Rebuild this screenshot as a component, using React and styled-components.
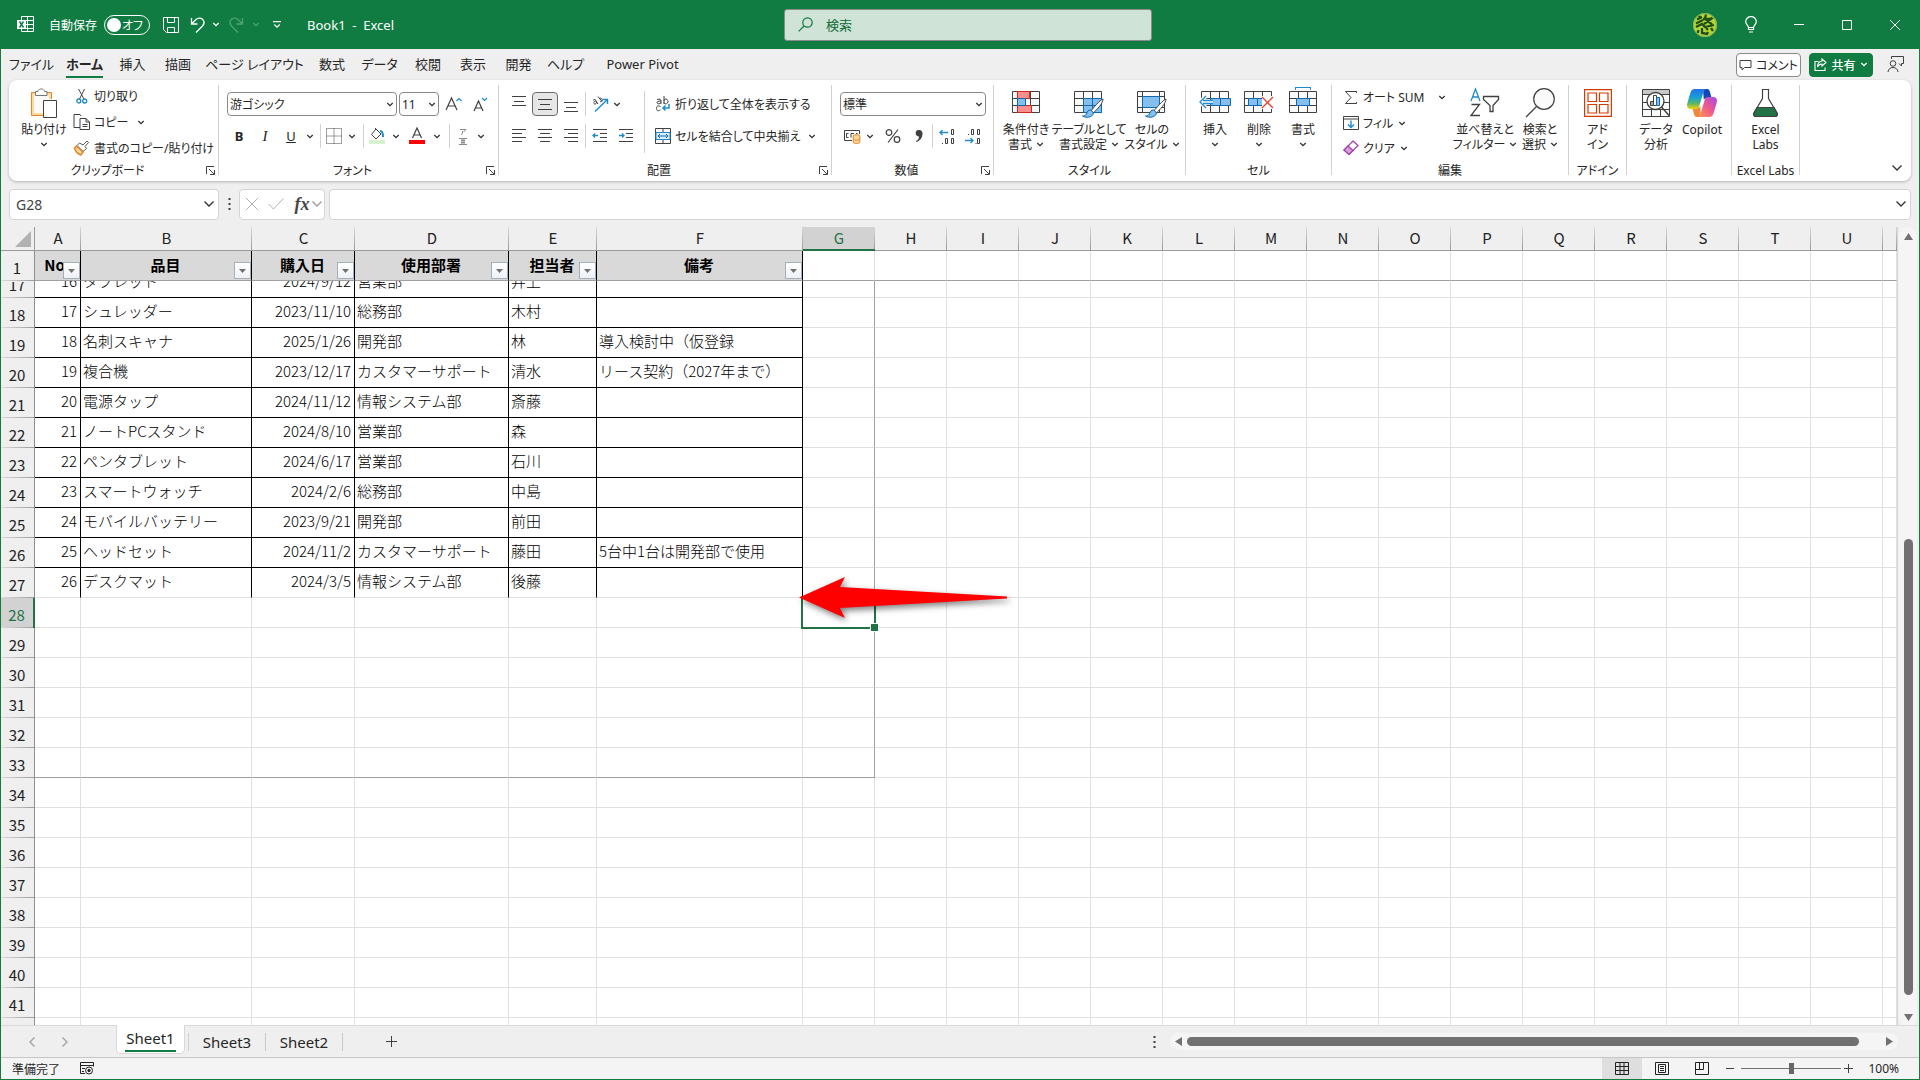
import { useState } from "react";
import styled, { createGlobalStyle, css } from "styled-components";

const GREEN = "#107c41";
const INK = "#262626";
const BLUE = "#1e8bcd";

const GlobalStyle = createGlobalStyle`
    * {
        box-sizing: border-box;
    }
    body {
        margin: 0;
        font-family: "Noto Sans", "Noto Sans CJK JP", sans-serif;
        font-size: 12px;
        color: ${INK};
    }
    button, input, select {
        font: inherit;
        color: inherit;
        font-feature-settings: inherit;
    }
    button {
        padding: 0;
        border: 0;
        background: transparent;
        cursor: pointer;
    }
    svg {
        display: block;
        flex: none;
    }
`;

const Window = styled.div`
    display: flex;
    flex-direction: column;
    height: 100vh;
    background: #efefef;
    border: 1px solid ${GREEN};
    border-top: 0;
    font-feature-settings: "palt";
    white-space: nowrap;
    overflow: hidden;
`;

/* ---------- title bar ---------- */

const TitleBar = styled.header`
    display: grid;
    grid-template-columns: 1fr 368px 1fr;
    align-items: center;
    flex: none;
    height: 49px;
    padding: 0 0 8px 16px;
    background: ${GREEN};
    color: #fff;
`;

const TitleSide = styled.div`
    display: flex;
    align-items: center;
    justify-content: ${(p) => (p.$end ? "flex-end" : "flex-start")};
    padding-top: 8px;
`;

const AutoSave = styled.label`
    display: flex;
    align-items: center;
    gap: 7px;
    margin: 0 8px 0 15px;
`;

const Toggle = styled.button`
    display: flex;
    align-items: center;
    justify-content: space-between;
    width: 46px;
    height: 20px;
    padding: 0 6px 0 2px;
    border: 1px solid #fff;
    border-radius: 10px;

    &::before {
        content: "";
        width: 14px;
        height: 14px;
        border-radius: 50%;
        background: #fff;
    }
`;

const BookName = styled.span`
    margin-left: 13px;
    font-size: 13px;
    white-space: pre;
`;

const SearchBox = styled.label`
    display: flex;
    align-items: center;
    gap: 13px;
    height: 32px;
    margin-top: 8px;
    padding: 0 13px;
    background: #cfe3d7;
    border: 1px solid #8b8b8b;
    border-radius: 3px;
    color: ${GREEN};

    input {
        flex: 1;
        border: 0;
        padding: 0;
        outline: none;
        background: transparent;
        font-size: 13px;
    }
    input::placeholder {
        color: #0e6b38;
        opacity: 1;
    }
`;

const IconButton = styled.button`
    display: flex;
    align-items: center;
    justify-content: center;
    flex: none;
    width: ${(p) => p.$w || 26}px;
    height: 24px;
    ${(p) =>
        p.$on &&
        css`
            background: #e6e6e6;
            border: 1px solid #6b6b6b;
            border-radius: 4px;
        `}
`;

const ItalicButton = styled(IconButton)`
    font: italic 15px "Liberation Serif", serif;
`;

const LetterButton = styled(IconButton)`
    font-size: 13px;
`;

/* ---------- ribbon ---------- */

const TabBar = styled.nav`
    display: flex;
    align-items: center;
    flex: none;
    height: 31px;
    padding: 0 11px 0 3px;
`;

const RibbonTab = styled.button`
    flex: none;
    display: flex;
    justify-content: center;
    width: ${(p) => p.$w}px;
    padding-top: 1px;
    font-size: 13px;
    font-weight: ${(p) => (p.$on ? 700 : 400)};

    span {
        line-height: 24px;
        border-bottom: 2px solid ${(p) => (p.$on ? GREEN : "transparent")};
    }
`;

const Spacer = styled.div`
    flex: 1;
`;

const CommentButton = styled.button`
    display: flex;
    align-items: center;
    justify-content: center;
    gap: 4px;
    width: 65px;
    height: 24px;
    margin-right: 8px;
    background: #fff;
    border: 1px solid #8a8a8a;
    border-radius: 4px;
`;

const ShareButton = styled(CommentButton)`
    width: 64px;
    margin-right: 9px;
    background: ${GREEN};
    border-color: ${GREEN};
    color: #fff;
    font-weight: 500;
`;

const RibbonCard = styled.section`
    display: flex;
    align-items: stretch;
    flex: none;
    height: 101px;
    margin: 0 8px;
    padding: 5px 0 6px;
    background: #fff;
    border-radius: 8px;
    box-shadow: 0 1px 3px rgba(0, 0, 0, 0.25);
`;

const GroupBox = styled.div`
    display: flex;
    flex-direction: column;
    flex: none;
    width: ${(p) => p.$w}px;
    border-right: 1px solid #d1d1d1;
`;

const GroupBody = styled.div`
    display: flex;
    flex: 1;
    padding-left: ${(p) => p.$pad || 0}px;
`;

const GroupFooter = styled.div`
    display: flex;
    align-items: center;
    justify-content: center;
    height: 14px;
    margin-bottom: -2px;

    span {
        flex: 1;
        text-align: center;
    }
    button {
        width: 12px;
    }
`;

const BigButton = styled.button`
    display: flex;
    flex-direction: column;
    align-items: center;
    align-self: flex-start;
    flex: none;
    width: ${(p) => p.$w}px;
    gap: 3px;
    padding-top: 2px;
    line-height: 15px;

    > svg {
        height: 32px;
    }
    span {
        display: flex;
        align-items: center;
        justify-content: center;
        gap: 4px;
        min-height: 15px;
    }
`;

const Stack = styled.div`
    display: flex;
    flex-direction: column;
    gap: ${(p) => p.$gap}px;
    padding-top: ${(p) => p.$top || 0}px;
    width: ${(p) => (p.$w ? p.$w + "px" : "auto")};
`;

const Line = styled.div`
    display: flex;
    align-items: center;
`;

const SmallButton = styled.button`
    display: flex;
    align-items: center;
    gap: 2px;
    min-width: ${(p) => p.$w || 0}px;
    height: ${(p) => p.$h || 22}px;

    > svg:first-child {
        width: 20px;
    }
    > svg + svg,
    > span + svg {
        margin-left: 3px;
    }
`;

const Rule = styled.i`
    flex: none;
    width: 1px;
    height: 24px;
    margin: 0 ${(p) => p.$m}px;
    background: #d1d1d1;
`;

const TallRule = styled(Rule)`
    height: 62px;
    margin: 6px 8px 0 5px;
`;

const SelectBox = styled.label`
    display: grid;
    align-items: center;
    width: ${(p) => p.$w}px;
    height: 24px;
    margin-right: 2px;
    border: 1px solid #8a8a8a;
    border-radius: 4px;
    background: #fff;

    > * {
        grid-area: 1 / 1;
    }
    select {
        width: 100%;
        height: 22px;
        padding: 0 2px;
        appearance: none;
        border: 0;
        outline: none;
        background: transparent;
    }
    svg {
        justify-self: end;
        margin-right: 2px;
        pointer-events: none;
    }
`;

const Collapse = styled.button`
    align-self: flex-end;
    margin: 0 8px 3px auto;
`;

/* ---------- formula bar ---------- */

const FormulaBar = styled.div`
    display: flex;
    align-items: center;
    flex: none;
    height: 32px;
    margin: 7px 8px;
`;

const Field = styled.div`
    display: flex;
    align-items: center;
    flex: none;
    width: ${(p) => p.$w}px;
    height: 31px;
    padding: ${(p) => p.$pad || "0 3px 0 6px"};
    background: #fff;
    border: 1px solid #d4d4d4;
    border-radius: 4px;

    input {
        flex: 1;
        min-width: 0;
        padding: 0;
        border: 0;
        outline: none;
        font-size: 14px;
        background: transparent;
        color: #444;
    }
`;

const FormulaField = styled(Field)`
    flex: 1;
    width: auto;
    margin-left: 4px;
`;

const Fx = styled.span`
    width: 22px;
    font: italic 700 18px "Liberation Serif", serif;
    line-height: 20px;
    color: #444;
    text-align: center;
`;

/* ---------- sheet ---------- */

const SheetArea = styled.main`
    display: flex;
    flex: 1;
    min-height: 0;
`;

const SheetPane = styled.div`
    flex: 1;
    min-width: 0;
    overflow: hidden;
    background: #fff;
    border-right: 1px solid #d8d8d8;
`;

const Sheet = styled.table`
    width: 100%;
    table-layout: fixed;
    border-collapse: separate;
    border-spacing: 0;
    font-family: "Noto Sans CJK JP", sans-serif;
    font-size: 15px;
    font-weight: 300;
    font-feature-settings: normal;
    color: #000;

    th,
    td {
        padding: 0;
        font-weight: inherit;
    }
`;

const Corner = styled.th`
    background: #efefef;
    border-right: 1px solid #9b9b9b;
    border-bottom: 1px solid #9b9b9b;

    svg {
        margin: 4px 3px 3px auto;
    }
`;

const ColHead = styled.th`
    height: 24px;
    line-height: 21px;
    vertical-align: top;
    background: linear-gradient(#d8d8d8, #9b9b9b) right / 1px 100% no-repeat, ${(p) => (p.$on ? "#d2d2d2" : "#efefef")};
    border-bottom: ${(p) => (p.$on ? `2px solid #217346` : "1px solid #9b9b9b")};
    color: ${(p) => (p.$on ? "#217346" : "#222")};
    font-weight: 400 !important;
`;

const RowHead = styled.th`
    background: linear-gradient(90deg, #dcdcdc, #9b9b9b) bottom / 100% 1px no-repeat,
        ${(p) => (p.$on ? "#d2d2d2" : "#efefef")};
    border-right: ${(p) => (p.$on ? `2px solid #217346` : "1px solid #8e8e8e")};
    color: ${(p) => (p.$on ? "#217346" : "#222")};
    font-weight: 400 !important;
`;

const LINES = { light: "#e0e0e0", black: "#000", page: "#a0a0a0" };

const Cell = styled.td`
    position: relative;
    border-right: 1px solid ${(p) => LINES[p.$right || "light"]};
    border-bottom: 1px solid ${(p) => LINES[p.$bottom || "light"]};
    ${(p) =>
        p.$title &&
        css`
            background: #d9d9d9;
            font-weight: 700 !important;
        `}
`;

const CellBox = styled.div`
    display: flex;
    align-items: flex-end;
    justify-content: ${(p) => p.$align || "flex-start"};
    height: ${(p) => (p.$short ? 16 : 29)}px;
    padding: 0 3px 0 2px;
    overflow: hidden;

    span {
        height: 29px;
        line-height: ${(p) => p.$line || 25}px;
    }
`;

const FilterButton = styled.button`
    position: absolute;
    right: 0;
    bottom: 1px;
    display: flex;
    align-items: center;
    justify-content: center;
    width: 17px;
    height: 17px;
    background: linear-gradient(#fff, #eef1f6);
    border: 1px solid #a6b0bd;
`;

const Selection = styled.div`
    position: absolute;
    inset: -2px;
    border: 2px solid #217346;
    z-index: 1;

    &::after {
        content: "";
        position: absolute;
        right: -5px;
        bottom: -5px;
        width: 7px;
        height: 7px;
        background: #217346;
        border: 1px solid #fff;
    }
`;

const Pointer = styled.svg`
    position: absolute;
    left: -8px;
    top: -28px;
    z-index: 2;
    overflow: visible;
    pointer-events: none;
    filter: drop-shadow(2px 3px 3px rgba(0, 0, 0, 0.5));
`;

const VScroll = styled.div`
    display: flex;
    flex-direction: column;
    align-items: center;
    justify-content: space-between;
    flex: none;
    width: 18px;
    margin: 0 2px -2px 1px;
    padding: 5px 0;
    background: #f5f5f5;
    border-radius: 9px;
`;

const VTrack = styled.div`
    display: flex;
    flex-direction: column;
    flex: 1;
    width: 9px;

    &::before {
        content: "";
        flex: 298;
    }
    &::after {
        content: "";
        flex: 18;
    }
    i {
        flex: 456;
        border-radius: 5px;
        background: #717171;
    }
`;

/* ---------- sheet tabs and status bar ---------- */

const SheetTabs = styled.div`
    display: flex;
    align-items: center;
    flex: none;
    height: 32px;
    border-top: 1px solid #dadada;
    padding-left: 18px;
`;

const SheetTab = styled.button`
    width: 77px;
    height: 18px;
    border-right: 1px solid #c8c8c8;
    font-size: 15px;
    line-height: 16px;
`;

const ActiveTab = styled.button`
    align-self: flex-start;
    width: 69px;
    height: 29px;
    margin: -1px 3px 0 31px;
    padding: 0 8px;
    background: #fff;
    border: 1px solid #d8d8d8;
    border-top: 0;
    border-radius: 0 0 5px 5px;
    font-size: 15px;
    line-height: 24px;

    span {
        display: block;
        height: 26px;
        border-bottom: 2px solid ${GREEN};
    }
`;

const TabsRule = styled(Rule)`
    height: 18px;
`;

const HScroll = styled.div`
    display: flex;
    align-items: center;
    width: 728px;
    height: 17px;
    margin: 0 21px 0 14px;
    padding: 0 4px;
    gap: 4px;
    background: #f5f5f5;
    border-radius: 9px;

    i {
        flex: 1;
        height: 9px;
        margin-right: 22px;
        border-radius: 5px;
        background: #717171;
    }
`;

const StatusBar = styled.footer`
    display: flex;
    align-items: center;
    flex: none;
    height: 22px;
    padding: 0 20px 0 11px;
    background: #f4f4f4;
    border-top: 1px solid #c6c6c6;
    gap: 20px;
`;

const StatusRight = styled.div`
    display: flex;
    align-items: center;
    margin-left: auto;
    height: 21px;
`;

const ViewButton = styled.button`
    display: flex;
    align-items: center;
    justify-content: center;
    width: 40px;
    height: 21px;
    background: ${(p) => (p.$on ? "#dedede" : "transparent")};
`;

const Zoom = styled.input`
    width: 100px;
    height: 20px;
    margin: 0 3px;
    appearance: none;
    background: linear-gradient(#717171, #717171) center / 100% 1px no-repeat;

    &::-webkit-slider-thumb {
        appearance: none;
        width: 5px;
        height: 11px;
        background: #666;
    }
`;

const ZoomText = styled.span`
    width: 34px;
    margin-left: 12px;
    text-align: right;
`;

/* ---------- icons ---------- */

const Svg = ({ w = 16, h = 16, sw = 1, c = "#404040", children }) => (
    <svg
        width={w}
        height={h}
        viewBox={`0 0 ${w} ${h}`}
        fill="none"
        stroke={c}
        strokeWidth={sw}
        aria-hidden="true"
    >
        {children}
    </svg>
);

const Chev = ({ c = "#303030", big }) =>
    big ? (
        <Svg w={12} h={8} c={c} sw={1.3}>
            <path d="M1.5 1.5 6 6 10.5 1.5" />
        </Svg>
    ) : (
        <Svg w={8} h={5} c={c} sw={1.3}>
            <path d="M1.3 1 4 3.7 6.7 1" />
        </Svg>
    );

const ExcelLogo = () => (
    <Svg w={17} h={17} c="#fff">
        <path d="M4.5 4V.5h12v15h-12V13M10.5.5v15M4.5 4.5h12M8 8.5h8.5M4.5 12.5h12" />
        <path d="M0 4h9v9H0z" fill="#fff" stroke="none" />
        <path d="m2.5 5.5 4 6M6.5 5.5l-4 6" stroke={GREEN} strokeWidth="1.5" />
    </Svg>
);

const SaveIcon = () => (
    <Svg c="#fff">
        <path d="M.5.5h15v15h-12l-3-3zM4.5.5v5h7v-5M4.5 15.5v-5h7v5" />
    </Svg>
);

const UndoIcon = ({ flip, c = "#fff" }) => (
    <Svg c={c} sw={1.3}>
        <g transform={flip ? "matrix(-1 0 0 1 16 0)" : undefined}>
            <path d="M1.5 1v6h6M2 6.5l4-4C8.5.3 12 .8 13.5 3.5c1 2 .5 4-1 5.500L6 15.500" />
        </g>
    </Svg>
);

const Avatar = () => (
    <Svg w={24} h={24}>
        <circle cx="12" cy="12" r="12" fill="#b5d62c" stroke="none" />
        <path
            d="M4 6.500 9 4M3 10.500l7-3.500M6 2.500 7.500 6M13 1.500l-1 4M10 6h8l-7 5M13 6.500l6 5M19 4.500l-4 4M3 14l6-3 3 3 9-2M5.500 17l-1 3M9 15v5l5 1 1-2M13 15l2 2M18 15l2 3"
            stroke="#1f4d1b"
            strokeWidth="2.300"
        />
        <circle cx="12" cy="12" r="11.500" stroke="#7fb069" />
    </Svg>
);

const BulbIcon = () => (
    <Svg w={12} h={17} c="#fff" sw={1.2}>
        <path d="M3.500 11.500C3.500 9.500.7 8.500.7 5.500A5 5 0 0 1 6 .7a5 5 0 0 1 5.300 4.800c0 3-2.800 4-2.800 6zM3.500 11.500v2h5v-2M4 16h4" />
    </Svg>
);

const PasteIcon = () => (
    <Svg w={28} h={32}>
        <path d="M6 5.500H1.500v23H13M17 5.500h4.500V12" stroke="#e3852b" />
        <path d="M6 7H3v20h10M17 7h3v5" stroke="#fbd997" strokeWidth="2" />
        <path d="M4 8h15v4.500h-6V26H4z" fill="#fafafa" stroke="none" />
        <path d="M5.500 8.500v-4H8c.5-3.500 6-3.500 6.500 0H17v4z" fill="#fff" stroke="#777" />
        <path d="M13.500 13.500h13v17h-13z" fill="#fff" stroke="#404040" />
    </Svg>
);

const CutIcon = () => (
    <Svg w={12} h={16}>
        <path d="M2.500 1 8 11M8.500 1 3.500 11" />
        <circle cx="2.800" cy="13" r="2" stroke={BLUE} strokeWidth="1.300" />
        <circle cx="8.700" cy="13" r="2" stroke={BLUE} strokeWidth="1.300" />
    </Svg>
);

const CopyIcon = () => (
    <Svg w={17} h={16}>
        <path d="M6.500 13.500h-6V.5h6l1 1.500" />
        <path d="M6.500 4.500h6l3.500 3.500v7.500H6.500zM12.500 4.500V8H16M9 10.500h5M9 12.500h5" />
    </Svg>
);

const PainterIcon = () => (
    <Svg w={17} h={16}>
        <path d="m9.500 5 4-4 1.500 1.500-3.500 4 1.500 2-3.500 3-6-6 2.500-2.500z" fill="#fff" stroke="#555" />
        <path d="m3 6 6.500 6-2 3C4 14 2 11.500 1 8z" fill="#fbd997" stroke="#e3852b" strokeWidth="1.500" />
    </Svg>
);

const Launcher = () => (
    <Svg w={9} h={9}>
        <path d="M8 .5H.5V8M3 3l5 5M8.500 4v4.500H4" />
    </Svg>
);

const BorderIcon = () => (
    <Svg>
        <path d="M.5.5h15v15H.5zM8 .5v15M.5 8h15" strokeDasharray="1 1" />
    </Svg>
);

const FillColorIcon = () => (
    <Svg h={18}>
        <path d="m7 2 5 5-5 5-4.500-4.500zM6 1l2 2" />
        <path d="M11 4c2.500 0 3 2 3 6" stroke={BLUE} strokeWidth="2" />
        <path d="M0 13h16v4H0z" fill="#d8f2d0" stroke="none" />
    </Svg>
);

const FontColorIcon = () => (
    <Svg h={18}>
        <path d="M3.500 11 8 1l4.500 10M5 8h6" strokeWidth="1.200" />
        <path d="M0 13h16v4H0z" fill="#f00" stroke="none" />
    </Svg>
);

const FuriganaIcon = () => (
    <Svg w={10} h={17} c="#8a8a8a">
        <path d="M2 1.500h6L5.500 4M4.500 3v2l-1 2M1 10.500h8M3 12.500h4M3 14.500h4M1 16.500h8M4 10v6M6 10v6" />
    </Svg>
);

const BigA = ({ down }) => (
    <Svg w={18} h={16} sw={1.2}>
        {down ? <path d="m3 15 4.500-10L12 15M4.500 12h6" /> : <path d="M1 14 6.500 2 12 14M3 10h7" />}
        <path d={down ? "m11 2 2.500 2.500L16 2" : "m11.500 5 2.500-2.500L16.500 5"} stroke={BLUE} />
    </Svg>
);

const Lines = ({ rows }) => (
    <Svg w={14} h={16}>
        {rows.map(([x, y, w]) => (
            <path key={y} d={`M${x} ${y}.5h${w}`} />
        ))}
    </Svg>
);

const OrientIcon = () => (
    <Svg w={17} h={16}>
        <path d="M1 4.500c1-1.500 3-1 3 .5L6 8M4 5c-2 0-3 2-1.500 3 1 .5 2-.5 2-2M6 .5l4 5M7 3c2-2 4 0 3 2-.5 1-1.500 1-2 .5" />
        <path d="M3 15.500 15 4M10.500 3.500h5V8" stroke={BLUE} strokeWidth="1.400" />
    </Svg>
);

const WrapIcon = () => (
    <Svg w={15} h={16}>
        <path d="M1.500 3.500c3-1 4 0 4 1.500V8M5.500 5c-3 0-4 .5-4 1.700C1.500 8 4 8.500 5.500 6.500M8.500 0v8M8.500 5c0-3 4-2.500 4 .5s-4 3-4 1M5 10.500c-3-1.500-4 0-4 2s1 3 4 1.500" />
        <path d="M13.500 8v4H7.500M10 9.500 7.500 12l2.500 2.500" stroke={BLUE} strokeWidth="1.500" />
    </Svg>
);

const MergeIcon = () => (
    <Svg>
        <path d="M.5.5h15v15H.5zM.5 4.500h15M.5 11.500h15M8 .5v4M8 11.500v4" />
        <path d="M1 4.500h14v7H1z" fill="#dceefa" stroke={BLUE} />
        <path d="M3 8h10M5 6 3 8l2 2M11 6l2 2-2 2" stroke="#1068b0" />
    </Svg>
);

const IndentIcon = ({ right }) => (
    <Svg>
        <path d="M1 1.500h14M8 5.500h7M8 9.500h7M1 13.500h14" />
        <path d={right ? "M1 7.500h5M4 5.500l2 2-2 2" : "M1 7.500h5M3 5.500l-2 2 2 2"} stroke={BLUE} strokeWidth="1.300" />
    </Svg>
);

const MoneyIcon = () => (
    <Svg w={17} h={16}>
        <path d="M8 12.500H.5v-10h15V6M4.500 5.500h-2v4h2M7 9.500v-4h3M12 5.500h1.500" />
        <ellipse cx="12.500" cy="8" rx="3.300" ry="1.300" fill="#fbd997" stroke="#e3852b" />
        <path d="M9.200 8v6c0 2 6.600 2 6.600 0V8M9.200 11c0 1.500 6.600 1.500 6.600 0" fill="#fbd997" stroke="#e3852b" />
    </Svg>
);

const PercentIcon = () => (
    <Svg sw={1.2}>
        <circle cx="4" cy="4.500" r="2.800" />
        <circle cx="12" cy="11.500" r="2.800" />
        <path d="M13 1.500 3 14.500" />
    </Svg>
);

const CommaIcon = () => (
    <Svg w={8} h={14} c="none">
        <path
            d="M4 1a3.200 3.200 0 0 1 3.500 3.500C7.500 9 5 11.500 1.500 13l-.5-1c2-1 3-2.500 3-4.500C2 7.500.7 6.200.7 4.300A3.200 3.200 0 0 1 4 1z"
            fill="#404040"
        />
    </Svg>
);

const DecimalIcon = ({ less }) => (
    <Svg w={16} h={17}>
        {less ? (
            <>
                <path d="M3 6.500h1M6.500 1.500h2v5h-2zM12.500 1.500h2v5h-2zM10.500 15.500h1M12.500 10.500h2v5h-2z" />
                <path d="M0 12.500h8M5.500 10 8 12.500 5.500 15" stroke={BLUE} strokeWidth="1.300" />
            </>
        ) : (
            <>
                <path d="M12.500 1.500h2v5h-2zM3 15.500h1M6.500 10.500h2v5h-2zM12.500 10.500h2v5h-2z" />
                <path d="M1 4.500h8M3.500 2 1 4.500 3.500 7" stroke={BLUE} strokeWidth="1.300" />
            </>
        )}
    </Svg>
);

const GRID = "M.5 4.500h27v21H.5zM.5 11.500h27M.5 18.500h27M9.500 4.500v21M18.500 4.500v21";

const Brush = () => (
    <>
        <path d="M29 12c-3 1-10 9-12 12l2 2c4-3 10-10 10-14z" fill="#fff" stroke="#404040" />
        <path d="M17 23c-3-.5-4 2-4.500 4-1 1.500-2.500 2-4 2 3 2 10 2 11-3z" fill="#84bff0" stroke="#1068b0" />
    </>
);

const CondIcon = () => (
    <Svg w={28} h={32}>
        <path d={GRID} fill="#fafafa" />
        <path d="M5.500 4.500h12v7h-12zM5.500 18.500h14v7h-14z" fill="#ff8f8f" stroke="#d9261c" />
        <path d="M5.500 11.500h8v7h-8z" fill="#84bff0" stroke="#1068b0" />
    </Svg>
);

const TableStyleIcon = () => (
    <Svg w={30} h={32}>
        <path d={GRID} fill="#fafafa" />
        <path d="M9.500 11.500h18v14h-18zM9.500 18.500h18M18.500 11.500v14" fill="#84bff0" stroke="#1068b0" />
        <Brush />
    </Svg>
);

const CellStyleIcon = () => (
    <Svg w={30} h={32}>
        <path d="M.5 4.500h27v21H.5zM.5 9.500h27M5.500 4.500v21M.5 20.500h27M22.500 4.500v21" fill="#fafafa" />
        <path d="M5.500 9.500h17v11h-17z" fill="#84bff0" stroke="#1068b0" />
        <Brush />
    </Svg>
);

const InsertIcon = () => (
    <Svg w={32} h={32}>
        <path d="M2.500 4.500h27v21h-27zM2.500 11.500h27M2.500 18.500h27M11.500 4.500v21M20.500 4.500v21" fill="#fafafa" />
        <path d="M11.500 11.500h20v7h-20zM21.500 11.500v7" fill="#84bff0" stroke="#1068b0" />
        <path d="M14 15H2M7 9l-6 6 6 6" stroke="#fff" strokeWidth="4" />
        <path d="M14 13.500H4M14 16.500H4M7 9l-6 6 6 6" stroke={BLUE} strokeWidth="1.300" />
    </Svg>
);

const DeleteIcon = () => (
    <Svg w={30} h={32}>
        <path d={GRID} fill="#fafafa" />
        <path d="M4.500 11.500h14l3 3.500-3 3.500h-14zM13.500 11.500v7" fill="#84bff0" stroke="#1068b0" />
        <path d="M18 9h12v13H18z" fill="#fff" stroke="none" />
        <path d="m18 10 11 11M29 10 18 21" stroke="#ea4335" strokeWidth="1.400" />
    </Svg>
);

const FormatIcon = () => (
    <Svg w={28} h={32}>
        <path d={GRID} fill="#fafafa" />
        <path d="M7.500 11.500h13v7h-13z" fill="#84bff0" stroke="#1068b0" />
        <path d="M6.500.5h15M6.500 0v3M21.500 0v3" stroke={BLUE} />
    </Svg>
);

const SigmaIcon = () => (
    <Svg w={14} h={15}>
        <path d="M12.500 3V1.500H1.500L7 7.500l-5.500 6h11V12" />
    </Svg>
);

const FillIcon = () => (
    <Svg>
        <path d="M.5 1.500h15v13H.5zM.5 4h15" />
        <path d="M8 5.500V12M5 9.500l3 3 3-3" stroke={BLUE} strokeWidth="1.400" />
    </Svg>
);

const EraserIcon = () => (
    <Svg c="#a03da8" sw={1.2}>
        <path d="m10 1 5 4.500-9 9-5-4.500z" fill="#fff" />
        <path d="m5 6 5 4.500-4 4L1 10z" fill="#d9a0dd" />
    </Svg>
);

const SortIcon = () => (
    <Svg w={30} h={32} sw={1.3}>
        <path d="m1 14 4.500-12L10 14M2.500 10h6" stroke={BLUE} />
        <path d="M1.500 17.500h8L1 28.500h9" />
        <path d="M13.500 9.500h15v3l-5.500 6v6h-3v-6l-6.500-6z" />
    </Svg>
);

const FindIcon = () => (
    <Svg w={30} h={32} sw={1.2}>
        <circle cx="19" cy="12" r="10.300" fill="#fafafa" />
        <path d="M11.500 19.500 1 30" />
    </Svg>
);

const AddinIcon = () => (
    <Svg w={28} h={32} c="#d83b01" sw={1.2}>
        <path d="M.6 2.600h26.800v26.800H.6zM4 6h8.500v8.500H4zM15.500 6H24v8.500h-8.500zM4 17.500h8.500V26H4zM15.500 17.500H24V26h-8.500z" />
    </Svg>
);

const AnalyzeIcon = () => (
    <Svg w={28} h={32}>
        <path d="M.5 2.500h27v27H.5z" fill="#fafafa" />
        <path d="M1 3h26v4H1z" fill="#c8c8c8" stroke="none" />
        <path d="M.5 7.500h27M.5 15.500h27M.5 22.500h27M9.500 22v7M18.500 22v7" />
        <circle cx="13.500" cy="14" r="8.500" fill="#fff" strokeWidth="1.300" />
        <path d="m19.500 20 8 9" strokeWidth="1.500" />
        <path d="M8.500 14.500h3v4h-3z" fill="#aaa" />
        <path d="M11.500 8.500h3v10h-3z" fill="#fff" />
        <path d="M14.500 10.500h3v8h-3z" fill="#84bff0" stroke="#1068b0" />
    </Svg>
);

const CopilotIcon = () => (
    <svg width="30" height="32" viewBox="0 0 30 32" aria-hidden="true">
        <defs>
            <linearGradient id="cpA" x1="0" y1="0" x2="0" y2="1">
                <stop offset="0" stopColor="#2870ea" />
                <stop offset=".4" stopColor="#159ed8" />
                <stop offset=".7" stopColor="#52b471" />
                <stop offset="1" stopColor="#f5d000" />
            </linearGradient>
            <linearGradient id="cpB" x1="1" y1="0" x2="0" y2="1">
                <stop offset="0" stopColor="#a348ea" />
                <stop offset=".5" stopColor="#ef5a8c" />
                <stop offset="1" stopColor="#fd9a4a" />
            </linearGradient>
        </defs>
        <path d="M16 2h4.500c2 0 2.600 3 3.500 7 .3 1.200 1 2 2 2h-6c-2 0-2.600.8-3.200 2z" fill="#1446b8" />
        <path d="M14 30H9.500c-2 0-2.600-3-3.500-7-.3-1.200-1-2-2-2h6c2 0 2.600-.8 3.200-2z" fill="#f0883c" />
        <path
            d="M7.500 2H20c-2 0-3 1.500-3.500 3l-4 13.500C12 20.500 11 22 9 22H4c-4 0-4.500-3-3.500-6.500l3-10C4.200 3.300 5.500 2 7.500 2z"
            fill="url(#cpA)"
        />
        <path
            d="M22.500 30H10c2 0 3-1.500 3.500-3l4-13.500c.5-2 1.500-3.500 3.500-3.500h5c4 0 4.500 3 3.500 6.500l-3 10c-.7 2.200-2 3.500-4 3.500z"
            fill="url(#cpB)"
        />
    </svg>
);

const FlaskIcon = () => (
    <Svg w={28} h={32} sw={1.2}>
        <path d="M10.500 2.500h6v9l8.500 14.500c1 2-.2 3.500-2 3.500H4c-1.800 0-3-1.500-2-3.500l8.500-14.500z" fill="#fff" />
        <path d="M5 20.500h17l3 5.500c1 2-.2 3.500-2 3.500H4c-1.800 0-3-1.500-2-3.500z" fill="#217346" />
    </Svg>
);

const CommentIcon = () => (
    <Svg w={13} h={12}>
        <path d="M1 1.500h11v7H5.500L3 11V8.500H1z" />
    </Svg>
);

const ShareIcon = () => (
    <Svg w={13} h={13} c="#fff" sw={1.1}>
        <path d="M4.500 3.500H1v9h10v-3M8 1l4 3.500L8 8V6C5.500 6 4.500 7 3.500 9c0-3 1.500-5.500 4.500-6z" />
    </Svg>
);

const PersonIcon = () => (
    <Svg w={17} h={17}>
        <path d="M4.500 3V.5h12v7h-2V10l-2.500-2.500" />
        <circle cx="6" cy="7.500" r="2.800" />
        <path d="M1 16c.3-6 9.700-6 10 0" />
    </Svg>
);

const MacroIcon = () => (
    <Svg w={14} h={13} c="#222">
        <path d="M5 11.500H.5v-11h13v4M.5 3.500h13M2 6.500h3M2 9.500h2" />
        <circle cx="9" cy="8.500" r="3.500" />
        <circle cx="9" cy="8.500" r="1.200" fill="#222" />
    </Svg>
);

const Tri = ({ d, w = 9, h = 9 }) => (
    <Svg w={w} h={h} c="none">
        <path d={d} fill="#717171" />
    </Svg>
);

const Dots = () => (
    <Svg w={3} h={12} c="none">
        <path d="M.5 0h2v2h-2zM.5 5h2v2h-2zM.5 10h2v2h-2z" fill="#404040" />
    </Svg>
);

/* ---------- data ---------- */

const TABS = [
    ["ファイル", 55],
    ["ホーム", 51],
    ["挿入", 45],
    ["描画", 46],
    ["ページ レイアウト", 107],
    ["数式", 48],
    ["データ", 47],
    ["校閲", 50],
    ["表示", 40],
    ["開発", 51],
    ["ヘルプ", 43],
    ["Power Pivot", 111],
];

const COLUMNS = [
    ["A", 46],
    ["B", 171],
    ["C", 103],
    ["D", 154],
    ["E", 88],
    ["F", 206],
    ..."GHIJKLMNOPQRSTU".split("").map((name) => [name, 72]),
];

const TITLES = ["No.", "品目", "購入日", "使用部署", "担当者", "備考"];

const ITEMS = {
    17: ["16", "タブレット", "2024/9/12", "営業部", "井上", ""],
    18: ["17", "シュレッダー", "2023/11/10", "総務部", "木村", ""],
    19: ["18", "名刺スキャナ", "2025/1/26", "開発部", "林", "導入検討中（仮登録"],
    20: ["19", "複合機", "2023/12/17", "カスタマーサポート", "清水", "リース契約（2027年まで）"],
    21: ["20", "電源タップ", "2024/11/12", "情報システム部", "斎藤", ""],
    22: ["21", "ノートPCスタンド", "2024/8/10", "営業部", "森", ""],
    23: ["22", "ペンタブレット", "2024/6/17", "営業部", "石川", ""],
    24: ["23", "スマートウォッチ", "2024/2/6", "総務部", "中島", ""],
    25: ["24", "モバイルバッテリー", "2023/9/21", "開発部", "前田", ""],
    26: ["25", "ヘッドセット", "2024/11/2", "カスタマーサポート", "藤田", "5台中1台は開発部で使用"],
    27: ["26", "デスクマット", "2024/3/5", "情報システム部", "後藤", ""],
};

const ROWS = Array.from({ length: 26 }, (_, i) => i + 17);
const LAST_ITEM_ROW = 27;
const LAST_PAGE_ROW = 33;

/* ---------- parts ---------- */

function Group({ label, width, pad, launcher, children }) {
    return (
        <GroupBox $w={width}>
            <GroupBody $pad={pad}>{children}</GroupBody>
            <GroupFooter>
                <span>{label}</span>
                {launcher && (
                    <button aria-label={`${label}の詳細`}>
                        <Launcher />
                    </button>
                )}
            </GroupFooter>
        </GroupBox>
    );
}

function Big({ icon, w, lines, drop }) {
    return (
        <BigButton $w={w}>
            {icon}
            <div>
                {lines.map((text, i) => (
                    <span key={i}>
                        {text}
                        {drop && i === lines.length - 1 && <Chev />}
                    </span>
                ))}
            </div>
        </BigButton>
    );
}

function Picker({ label, width, value }) {
    return (
        <SelectBox $w={width}>
            <select aria-label={label} defaultValue={value}>
                <option>{value}</option>
            </select>
            <Chev />
        </SelectBox>
    );
}

function Ribbon() {
    return (
        <RibbonCard>
            <Group label="クリップボード" width={210} pad={7} launcher>
                <Big w={56} icon={<PasteIcon />} lines={["貼り付け", ""]} drop />
                <Stack $gap={3}>
                    <SmallButton>
                        <CutIcon />
                        切り取り
                    </SmallButton>
                    <Line>
                        <SmallButton $w={62}>
                            <CopyIcon />
                            コピー
                        </SmallButton>
                        <IconButton $w={14} aria-label="コピーのオプション">
                            <Chev />
                        </IconButton>
                    </Line>
                    <SmallButton>
                        <PainterIcon />
                        書式のコピー/貼り付け
                    </SmallButton>
                </Stack>
            </Group>

            <Group label="フォント" width={280} pad={8} launcher>
                <Stack $gap={8} $top={7}>
                    <Line>
                        <Picker label="フォント名" width={170} value="游ゴシック" />
                        <Picker label="フォント サイズ" width={40} value="11" />
                        <IconButton aria-label="フォント サイズの拡大">
                            <BigA />
                        </IconButton>
                        <IconButton aria-label="フォント サイズの縮小">
                            <BigA down />
                        </IconButton>
                    </Line>
                    <Line>
                        <LetterButton $w={24} aria-label="太字">
                            <b>B</b>
                        </LetterButton>
                        <ItalicButton $w={28} aria-label="斜体">
                            I
                        </ItalicButton>
                        <LetterButton $w={24} aria-label="下線">
                            <u>U</u>
                        </LetterButton>
                        <IconButton $w={14} aria-label="下線の種類">
                            <Chev />
                        </IconButton>
                        <Rule $m={3} />
                        <IconButton $w={20} aria-label="罫線">
                            <BorderIcon />
                        </IconButton>
                        <IconButton $w={16} aria-label="罫線の種類">
                            <Chev />
                        </IconButton>
                        <Rule $m={3} />
                        <IconButton $w={20} aria-label="塗りつぶしの色">
                            <FillColorIcon />
                        </IconButton>
                        <IconButton $w={18} aria-label="塗りつぶしの色を選択">
                            <Chev />
                        </IconButton>
                        <IconButton $w={24} aria-label="フォントの色">
                            <FontColorIcon />
                        </IconButton>
                        <IconButton $w={16} aria-label="フォントの色を選択">
                            <Chev />
                        </IconButton>
                        <Rule $m={4} />
                        <IconButton $w={18} aria-label="ふりがな">
                            <FuriganaIcon />
                        </IconButton>
                        <IconButton $w={18} aria-label="ふりがなのオプション">
                            <Chev />
                        </IconButton>
                    </Line>
                </Stack>
            </Group>

            <Group label="配置" width={333} pad={7} launcher>
                <Stack $gap={8} $top={7}>
                    <Line>
                        <IconButton aria-label="上揃え">
                            <Lines rows={[[0, 0, 14], [2, 5, 10], [0, 9, 14]]} />
                        </IconButton>
                        <IconButton $on aria-label="上下中央揃え">
                            <Lines rows={[[0, 3, 14], [2, 8, 10], [0, 13, 14]]} />
                        </IconButton>
                        <IconButton aria-label="下揃え">
                            <Lines rows={[[0, 6, 14], [2, 11, 10], [0, 15, 14]]} />
                        </IconButton>
                        <Rule $m={1} />
                        <IconButton aria-label="方向">
                            <OrientIcon />
                        </IconButton>
                        <IconButton $w={8} aria-label="方向のオプション">
                            <Chev />
                        </IconButton>
                    </Line>
                    <Line>
                        <IconButton aria-label="左揃え">
                            <Lines rows={[[0, 1, 14], [0, 5, 10], [0, 9, 14], [0, 13, 10]]} />
                        </IconButton>
                        <IconButton aria-label="中央揃え">
                            <Lines rows={[[0, 1, 14], [2, 5, 10], [0, 9, 14], [2, 13, 10]]} />
                        </IconButton>
                        <IconButton aria-label="右揃え">
                            <Lines rows={[[0, 1, 14], [4, 5, 10], [0, 9, 14], [4, 13, 10]]} />
                        </IconButton>
                        <Rule $m={1} />
                        <IconButton aria-label="インデントを減らす">
                            <IndentIcon />
                        </IconButton>
                        <IconButton aria-label="インデントを増やす">
                            <IndentIcon right />
                        </IconButton>
                    </Line>
                </Stack>
                <TallRule />
                <Stack $gap={8} $top={7}>
                    <SmallButton $h={24}>
                        <WrapIcon />
                        折り返して全体を表示する
                    </SmallButton>
                    <Line>
                        <SmallButton $h={24} $w={150}>
                            <MergeIcon />
                            セルを結合して中央揃え
                        </SmallButton>
                        <IconButton $w={18} aria-label="結合のオプション">
                            <Chev />
                        </IconButton>
                    </Line>
                </Stack>
            </Group>

            <Group label="数値" width={162} pad={8} launcher>
                <Stack $gap={8} $top={7}>
                    <Picker label="表示形式" width={146} value="標準" />
                    <Line>
                        <IconButton $w={24} aria-label="通貨表示形式">
                            <MoneyIcon />
                        </IconButton>
                        <IconButton $w={12} aria-label="通貨の種類">
                            <Chev />
                        </IconButton>
                        <IconButton $w={33} aria-label="パーセント スタイル">
                            <PercentIcon />
                        </IconButton>
                        <IconButton $w={20} aria-label="桁区切りスタイル">
                            <CommaIcon />
                        </IconButton>
                        <Rule $m={3} />
                        <IconButton $w={22} aria-label="小数点以下の表示桁数を増やす">
                            <DecimalIcon />
                        </IconButton>
                        <IconButton $w={30} aria-label="小数点以下の表示桁数を減らす">
                            <DecimalIcon less />
                        </IconButton>
                    </Line>
                </Stack>
            </Group>

            <Group label="スタイル" width={192} pad={5}>
                <Big w={54} icon={<CondIcon />} lines={["条件付き", "書式"]} drop />
                <Big w={72} icon={<TableStyleIcon />} lines={["テーブルとして", "書式設定"]} drop />
                <Big w={54} icon={<CellStyleIcon />} lines={["セルの", "スタイル"]} drop />
            </Group>

            <Group label="セル" width={146} pad={7}>
                <Big w={44} icon={<InsertIcon />} lines={["挿入", ""]} drop />
                <Big w={44} icon={<DeleteIcon />} lines={["削除", ""]} drop />
                <Big w={44} icon={<FormatIcon />} lines={["書式", ""]} drop />
            </Group>

            <Group label="編集" width={237} pad={9}>
                <Stack $gap={3} $w={114}>
                    <Line>
                        <SmallButton $w={94}>
                            <SigmaIcon />
                            オート SUM
                        </SmallButton>
                        <IconButton $w={14} aria-label="オート SUM のオプション">
                            <Chev />
                        </IconButton>
                    </Line>
                    <SmallButton>
                        <FillIcon />
                        フィル
                        <Chev />
                    </SmallButton>
                    <SmallButton>
                        <EraserIcon />
                        クリア
                        <Chev />
                    </SmallButton>
                </Stack>
                <Big w={60} icon={<SortIcon />} lines={["並べ替えと", "フィルター"]} drop />
                <Big w={50} icon={<FindIcon />} lines={["検索と", "選択"]} drop />
            </Group>

            <Group label="アドイン" width={58}>
                <Big w={57} icon={<AddinIcon />} lines={["アド", "イン"]} />
            </Group>

            <Group label="" width={105} pad={5}>
                <Big w={48} icon={<AnalyzeIcon />} lines={["データ", "分析"]} />
                <Big w={44} icon={<CopilotIcon />} lines={["Copilot"]} />
            </Group>

            <Group label="Excel Labs" width={68}>
                <Big w={67} icon={<FlaskIcon />} lines={["Excel", "Labs"]} />
            </Group>

            <Collapse aria-label="リボンを折りたたむ">
                <Chev big />
            </Collapse>
        </RibbonCard>
    );
}

function SheetRow({ row, selectedRow }) {
    const short = row === 17;
    const item = ITEMS[row];
    return (
        <tr>
            <RowHead scope="row" $on={row === selectedRow}>
                <CellBox $short={short} $align="center" $line={31}>
                    <span>{row}</span>
                </CellBox>
            </RowHead>
            {COLUMNS.map(([name], i) => {
                const inItems = item && i < 6;
                const inPage = row <= LAST_PAGE_ROW && i <= 6;
                let right = "light";
                let bottom = "light";
                if (inItems) right = "black";
                else if (inPage && i === 6) right = "page";
                if (inItems && row < LAST_ITEM_ROW) bottom = "black";
                else if (inPage && row === LAST_PAGE_ROW) bottom = "page";
                return (
                    <Cell key={name} $right={right} $bottom={bottom}>
                        <CellBox $short={short} $align={i === 0 || i === 2 ? "flex-end" : "flex-start"}>
                            {inItems && <span>{item[i]}</span>}
                        </CellBox>
                        {row === selectedRow && name === "G" && (
                            <>
                                <Selection />
                                <Pointer width="216" height="56" viewBox="0 0 216 56" aria-hidden="true">
                                    <path d="M4 27.500 50 7l-5 10 167 9.500v2L45 38l5 10z" fill="#f00" />
                                </Pointer>
                            </>
                        )}
                    </Cell>
                );
            })}
            <Cell />
        </tr>
    );
}

function SheetTable() {
    return (
        <Sheet>
            <colgroup>
                <col width="34" />
                {COLUMNS.map(([name, width]) => (
                    <col key={name} width={width} />
                ))}
                <col />
            </colgroup>
            <thead>
                <tr>
                    <Corner>
                        <Svg w={16} h={16} c="none">
                            <path d="M16 0v16H0z" fill="#b2b2b2" />
                        </Svg>
                    </Corner>
                    {COLUMNS.map(([name]) => (
                        <ColHead key={name} scope="col" $on={name === "G"}>
                            {name}
                        </ColHead>
                    ))}
                    <ColHead />
                </tr>
            </thead>
            <tbody>
                <tr>
                    <RowHead scope="row">
                        <CellBox $align="center" $line={31}>
                            <span>1</span>
                        </CellBox>
                    </RowHead>
                    {COLUMNS.map(([name], i) => (
                        <Cell key={name} $title={i < 6} $right={i < 6 ? "black" : "light"} $bottom="page">
                            <CellBox $align="center" $line={27}>
                                {i < 6 && <span>{TITLES[i]}</span>}
                            </CellBox>
                            {i < 6 && (
                                <FilterButton aria-label={`${TITLES[i]}のフィルター`}>
                                    <Tri w={7} h={4} d="M0 0h7L3.500 4z" />
                                </FilterButton>
                            )}
                        </Cell>
                    ))}
                    <Cell $bottom="page" />
                </tr>
                {ROWS.map((row) => (
                    <SheetRow key={row} row={row} selectedRow={28} />
                ))}
            </tbody>
        </Sheet>
    );
}

function App() {
    const [autoSave, setAutoSave] = useState(false);
    const [zoom, setZoom] = useState(100);

    return (
        <Window>
            <GlobalStyle />
            <TitleBar>
                <TitleSide>
                    <ExcelLogo />
                    <AutoSave>
                        自動保存
                        <Toggle role="switch" aria-checked={autoSave} onClick={() => setAutoSave(!autoSave)}>
                            オフ
                        </Toggle>
                    </AutoSave>
                    <IconButton aria-label="上書き保存">
                        <SaveIcon />
                    </IconButton>
                    <IconButton $w={28} aria-label="元に戻す">
                        <UndoIcon />
                    </IconButton>
                    <IconButton $w={8} aria-label="元に戻す履歴">
                        <Chev c="#fff" />
                    </IconButton>
                    <IconButton $w={32} aria-label="やり直し">
                        <UndoIcon flip c="#4da274" />
                    </IconButton>
                    <IconButton $w={8} aria-label="やり直し履歴">
                        <Chev c="#4da274" />
                    </IconButton>
                    <IconButton $w={34} aria-label="クイック アクセス ツール バーのユーザー設定">
                        <Svg w={8} h={8} c="#fff" sw={1.2}>
                            <path d="M0 .6h8M1.300 3.500 4 6.200l2.700-2.700" />
                        </Svg>
                    </IconButton>
                    <BookName>{"Book1  -  Excel"}</BookName>
                </TitleSide>
                <SearchBox>
                    <Svg w={15} h={15} c={GREEN} sw={1.2}>
                        <circle cx="9.500" cy="5.500" r="4.700" />
                        <path d="M6 9 .7 14.300" />
                    </Svg>
                    <input placeholder="検索" aria-label="検索" />
                </SearchBox>
                <TitleSide $end>
                    <IconButton $w={44} aria-label="アカウント">
                        <Avatar />
                    </IconButton>
                    <IconButton $w={48} aria-label="ヒント">
                        <BulbIcon />
                    </IconButton>
                    <IconButton $w={48} aria-label="最小化">
                        <Svg w={10} h={10} c="#fff">
                            <path d="M0 4.500h10" />
                        </Svg>
                    </IconButton>
                    <IconButton $w={48} aria-label="最大化">
                        <Svg w={10} h={10} c="#fff">
                            <path d="M.5.5h9v9h-9z" />
                        </Svg>
                    </IconButton>
                    <IconButton $w={48} aria-label="閉じる">
                        <Svg w={10} h={10} c="#fff">
                            <path d="m0 0 10 10M10 0 0 10" />
                        </Svg>
                    </IconButton>
                </TitleSide>
            </TitleBar>

            <TabBar>
                {TABS.map(([name, width]) => (
                    <RibbonTab key={name} $w={width} $on={name === "ホーム"}>
                        <span>{name}</span>
                    </RibbonTab>
                ))}
                <Spacer />
                <CommentButton>
                    <CommentIcon />
                    コメント
                </CommentButton>
                <ShareButton>
                    <ShareIcon />
                    共有
                    <Chev c="#fff" />
                </ShareButton>
                <IconButton aria-label="共同編集者">
                    <PersonIcon />
                </IconButton>
            </TabBar>

            <Ribbon />

            <FormulaBar>
                <Field $w={210}>
                    <input aria-label="名前ボックス" defaultValue="G28" />
                    <Chev big />
                </Field>
                <IconButton $w={20} aria-label="サイズ変更">
                    <Dots />
                </IconButton>
                <Field $w={86} $pad="0 1px 0 5px">
                    <IconButton $w={14} aria-label="キャンセル">
                        <Svg w={12} h={12} c="#b0b0b0">
                            <path d="m0 0 12 12M12 0 0 12" />
                        </Svg>
                    </IconButton>
                    <IconButton $w={34} aria-label="入力">
                        <Svg w={16} h={12} c="#b0b0b0">
                            <path d="m.5 6 5 5L15.500.500" />
                        </Svg>
                    </IconButton>
                    <Fx>fx</Fx>
                    <Chev big c="#9a9a9a" />
                </Field>
                <FormulaField>
                    <input aria-label="数式バー" />
                    <Chev big />
                </FormulaField>
            </FormulaBar>

            <SheetArea>
                <SheetPane>
                    <SheetTable />
                </SheetPane>
                <VScroll>
                    <Tri d="M4.500 1 9 8H0z" />
                    <VTrack>
                        <i />
                    </VTrack>
                    <Tri d="M4.500 8 9 1H0z" />
                </VScroll>
            </SheetArea>

            <SheetTabs>
                <IconButton aria-label="前のシート">
                    <Svg w={6} h={10} c="#a0a0a0" sw={1.3}>
                        <path d="M5.500.500 1 5l4.500 4.500" />
                    </Svg>
                </IconButton>
                <IconButton $w={40} aria-label="次のシート">
                    <Svg w={6} h={10} c="#a0a0a0" sw={1.3}>
                        <path d="M.500.500 5 5 .500 9.500" />
                    </Svg>
                </IconButton>
                <ActiveTab>
                    <span>Sheet1</span>
                </ActiveTab>
                <TabsRule $m={0} />
                <SheetTab>Sheet3</SheetTab>
                <SheetTab>Sheet2</SheetTab>
                <IconButton $w={96} aria-label="新しいシート">
                    <Svg w={11} h={11}>
                        <path d="M5.500 0v11M0 5.500h11" />
                    </Svg>
                </IconButton>
                <Spacer />
                <Dots />
                <HScroll>
                    <Tri d="M1 4.500 8 0v9z" />
                    <i />
                    <Tri d="M8 4.500 1 0v9z" />
                </HScroll>
            </SheetTabs>

            <StatusBar>
                準備完了
                <MacroIcon />
                <StatusRight>
                    <ViewButton $on aria-label="標準">
                        <Svg w={14} h={13} c="#222">
                            <path d="M.5.5h13v12H.5zM.5 4.500h13M.5 8.500h13M5 .5v12M9 .5v12" />
                        </Svg>
                    </ViewButton>
                    <ViewButton aria-label="ページ レイアウト">
                        <Svg w={14} h={13} c="#222">
                            <path d="M.5.5h13v12H.5zM3.500 2.500h7v8h-7zM5 4.500h4M5 6.500h4M5 8.500h4" />
                        </Svg>
                    </ViewButton>
                    <ViewButton aria-label="改ページ プレビュー">
                        <Svg w={14} h={13} c="#222">
                            <path d="M.5.5h13v12H.5zM.5 7.500h8v-7M4.500.5v7" />
                        </Svg>
                    </ViewButton>
                    <IconButton $w={16} aria-label="縮小" onClick={() => setZoom(zoom - 10)}>
                        <Svg w={8} h={9}>
                            <path d="M0 4.500h8" />
                        </Svg>
                    </IconButton>
                    <Zoom
                        type="range"
                        aria-label="ズーム"
                        min="0"
                        max="200"
                        value={zoom}
                        onChange={(e) => setZoom(Number(e.target.value))}
                    />
                    <IconButton $w={9} aria-label="拡大" onClick={() => setZoom(zoom + 10)}>
                        <Svg w={9} h={9}>
                            <path d="M0 4.500h9M4.500 0v9" />
                        </Svg>
                    </IconButton>
                    <ZoomText>{zoom}%</ZoomText>
                </StatusRight>
            </StatusBar>
        </Window>
    );
}

export default App;
